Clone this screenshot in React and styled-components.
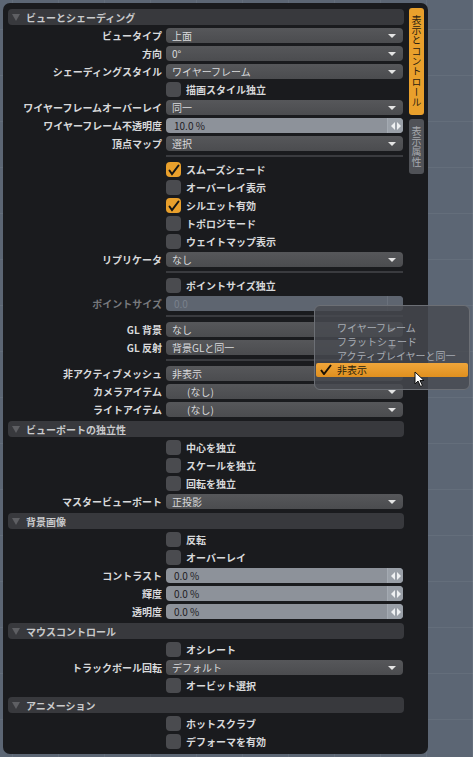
import React from "react";
import styled, { createGlobalStyle } from "styled-components";

const GlobalStyle = createGlobalStyle`
  html, body {
    margin: 0;
    padding: 0;
  }
  body {
    background-color: #5c6674;
    background-image:
      linear-gradient(90deg, rgba(255,255,255,0.05) 1px, transparent 1px),
      linear-gradient(0deg, rgba(255,255,255,0.05) 1px, transparent 1px);
    background-size: 46px 46px;
    background-position: 12px 30px;
    font-family: "Noto Sans CJK JP", "Noto Sans", sans-serif;
  }
`;

const Page = styled.div`
  position: relative;
  width: 473px;
  height: 757px;
  padding: 3px;
  box-sizing: border-box;
`;

const Panel = styled.div`
  width: 425px;
  height: 751px;
  box-sizing: border-box;
  background: #1a1b1e;
  border-radius: 7px;
  padding: 6px 4px 5px 5px;

  display: flex;
  flex-direction: row;
  align-items: flex-start;
`;

const Main = styled.div`
  width: 397px;
  display: flex;
  flex-direction: column;
  gap: 3px;
`;

const Tabs = styled.div`
  width: 15px;
  margin-left: 4px;
  margin-top: -1px;
  display: flex;
  flex-direction: column;
  gap: 4px;
`;

const Tab = styled.div`
  writing-mode: vertical-rl;
  font-size: 10px;
  line-height: 15px;
  letter-spacing: 0.3px;
  padding: 7px 0;
  border-radius: 3px;
  text-align: center;
  background: ${(p) => (p.$active ? "#e9a02c" : "#505257")};
  color: ${(p) => (p.$active ? "#2b2010" : "#a6a9ae")};
`;

const Header = styled.div`
  height: 16px;
  margin-top: 1px;
  width: 396px;
  box-sizing: border-box;
  background: #38393d;
  border-radius: 4px;
  display: flex;
  align-items: center;
  gap: 6px;
  padding-left: 4px;
  color: #c9cacc;
  font-size: 10px;
  font-weight: bold;

  &:first-child {
    margin-top: 0;
  }
`;

const Tri = styled.span`
  width: 0;
  height: 0;
  border-left: 4px solid transparent;
  border-right: 4px solid transparent;
  border-top: 7px solid #5e5f63;
`;

const Row = styled.div`
  display: grid;
  grid-template-columns: 154px 237px;
  column-gap: 4px;
  height: 15px;
`;

const Label = styled.div`
  text-align: right;
  font-size: 10px;
  font-weight: bold;
  line-height: 15px;
  white-space: nowrap;
  color: ${(p) => (p.$dim ? "#77797d" : "#d8d9db")};
`;

const Drop = styled.div`
  position: relative;
  height: 15px;
  box-sizing: border-box;
  border-radius: 4px;
  background: linear-gradient(#56575a, #4b4c4f);
  color: #d9dadc;
  font-size: 10px;
  line-height: 15px;
  padding-left: ${(p) => p.$pad || 6}px;
  white-space: nowrap;
  overflow: hidden;
`;

const Arrow = styled.span`
  position: absolute;
  right: 7px;
  top: 6px;
  width: 0;
  height: 0;
  border-left: 4px solid transparent;
  border-right: 4px solid transparent;
  border-top: 4px solid #e4e4e4;
`;

const Slider = styled.div`
  display: flex;
  height: 15px;
  border-radius: 4px;
  overflow: hidden;
  background: ${(p) => (p.$dim ? "#5e6570" : "#8d929a")};
  color: ${(p) => (p.$dim ? "#7a818c" : "#1e2024")};
  font-size: 10px;
  line-height: 15px;
`;

const SliderValue = styled.div`
  flex: 1;
  padding-left: 8px;
`;

const Handle = styled.div`
  width: 15px;
  display: flex;
  align-items: center;
  justify-content: center;
  background: ${(p) => (p.$dim ? "#5e6570" : "#9aa0a8")};
  border-left: 1px solid ${(p) => (p.$dim ? "#6a717c" : "#a4aab2")};
`;

const CheckWrap = styled.div`
  display: flex;
  align-items: center;
  gap: 5px;
  color: #d8d9db;
  font-size: 10px;
  font-weight: bold;
  white-space: nowrap;
`;

const Box = styled.div`
  width: 15px;
  height: 15px;
  border-radius: 4px;
  background: ${(p) => (p.$on ? "#e9a02c" : "#4a4b4f")};
  display: flex;
  align-items: center;
  justify-content: center;
`;

const Sep = styled.div`
  height: 5px;
  display: grid;
  grid-template-columns: 154px 237px;
  column-gap: 4px;
  &::after {
    content: "";
    grid-column: 2;
    height: 2px;
    margin-top: 1px;
    background: #3a3b3f;
  }
`;

const Popup = styled.div`
  position: absolute;
  left: 314px;
  top: 305px;
  width: 156px;
  height: 85px;
  box-sizing: border-box;
  padding: 15px 1px 0 1px;
  border-radius: 6px;
  border: 1px solid #6c6f75;
  background: rgba(72, 75, 81, 0.82);
`;

const Item = styled.div`
  position: relative;
  height: 14px;
  line-height: 14px;
  font-size: 10px;
  padding-left: 21px;
  border-radius: 2px;
  white-space: nowrap;
  color: ${(p) => (p.$sel ? "#2a1e0c" : "#a7acb4")};
  background: ${(p) => (p.$sel ? "linear-gradient(#f0a63a, #e0901f)" : "transparent")};
`;

const Cursor = styled.svg`
  position: absolute;
  left: 414px;
  top: 371px;
`;

const Check = () => (
  <svg width="12" height="12" viewBox="0 0 12 12">
    <path d="M1.5 6.5 L4 10 L10.5 1.5" stroke="#151515" strokeWidth="2" fill="none" strokeLinecap="round" />
  </svg>
);

const Knob = () => (
  <svg width="10" height="8" viewBox="0 0 10 8">
    <path d="M4 0 L0 4 L4 8 Z M6 0 L10 4 L6 8 Z" fill="#eef0f2" />
  </svg>
);

const DropRow = ({ label, value, pad, arrow = true }) => (
  <Row>
    <Label>{label}</Label>
    <Drop $pad={pad}>
      {value}
      {arrow && <Arrow />}
    </Drop>
  </Row>
);

const SliderRow = ({ label, value, dim }) => (
  <Row>
    <Label $dim={dim}>{label}</Label>
    <Slider $dim={dim}>
      <SliderValue>{value}</SliderValue>
      <Handle $dim={dim}>{!dim && <Knob />}</Handle>
    </Slider>
  </Row>
);

const CheckRow = ({ label, on }) => (
  <Row>
    <span />
    <CheckWrap>
      <Box $on={on}>{on && <Check />}</Box>
      {label}
    </CheckWrap>
  </Row>
);

const Section = ({ title }) => (
  <Header>
    <Tri />
    {title}
  </Header>
);

export default function App() {
  return (
    <Page>
      <GlobalStyle />
      <Panel>
        <Main>
          <Section title="ビューとシェーディング" />
          <DropRow label="ビュータイプ" value="上面" />
          <DropRow label="方向" value="0°" />
          <DropRow label="シェーディングスタイル" value="ワイヤーフレーム" />
          <CheckRow label="描画スタイル独立" />
          <DropRow label="ワイヤーフレームオーバーレイ" value="同一" />
          <SliderRow label="ワイヤーフレーム不透明度" value="10.0 %" />
          <DropRow label="頂点マップ" value="選択" />
          <Sep />
          <CheckRow label="スムーズシェード" on />
          <CheckRow label="オーバーレイ表示" />
          <CheckRow label="シルエット有効" on />
          <CheckRow label="トポロジモード" />
          <CheckRow label="ウェイトマップ表示" />
          <DropRow label="リプリケータ" value="なし" />
          <Sep />
          <CheckRow label="ポイントサイズ独立" />
          <SliderRow label="ポイントサイズ" value="0.0" dim />
          <Sep />
          <DropRow label="GL 背景" value="なし" />
          <DropRow label="GL 反射" value="背景GLと同一" />
          <Sep />
          <DropRow label="非アクティブメッシュ" value="非表示" />
          <DropRow label="カメラアイテム" value="(なし)" pad={21} />
          <DropRow label="ライトアイテム" value="(なし)" pad={21} />
          <Section title="ビューポートの独立性" />
          <CheckRow label="中心を独立" />
          <CheckRow label="スケールを独立" />
          <CheckRow label="回転を独立" />
          <DropRow label="マスタービューポート" value="正投影" />
          <Section title="背景画像" />
          <CheckRow label="反転" />
          <CheckRow label="オーバーレイ" />
          <SliderRow label="コントラスト" value="0.0 %" />
          <SliderRow label="輝度" value="0.0 %" />
          <SliderRow label="透明度" value="0.0 %" />
          <Section title="マウスコントロール" />
          <CheckRow label="オシレート" />
          <DropRow label="トラックボール回転" value="デフォルト" />
          <CheckRow label="オービット選択" />
          <Section title="アニメーション" />
          <CheckRow label="ホットスクラブ" />
          <CheckRow label="デフォーマを有効" />
        </Main>
        <Tabs>
          <Tab $active>表示とコントロール</Tab>
          <Tab>表示属性</Tab>
        </Tabs>
      </Panel>

      <Popup>
        <Item>ワイヤーフレーム</Item>
        <Item>フラットシェード</Item>
        <Item>アクティブレイヤーと同一</Item>
        <Item $sel>
          <svg width="12" height="11" viewBox="0 0 12 11" style={{ position: "absolute", left: 4, top: 1 }}>
            <path d="M1 6 L4 10 L11 1" stroke="#1a1206" strokeWidth="2" fill="none" />
          </svg>
          非表示
        </Item>
      </Popup>

      <Cursor width="12" height="17" viewBox="0 0 12 17">
        <path d="M1 1 L1 13 L4 10 L6.5 15.5 L8.5 14.5 L6 9.5 L10 9.5 Z" fill="#fff" stroke="#111" strokeWidth="1" />
      </Cursor>
    </Page>
  );
}
